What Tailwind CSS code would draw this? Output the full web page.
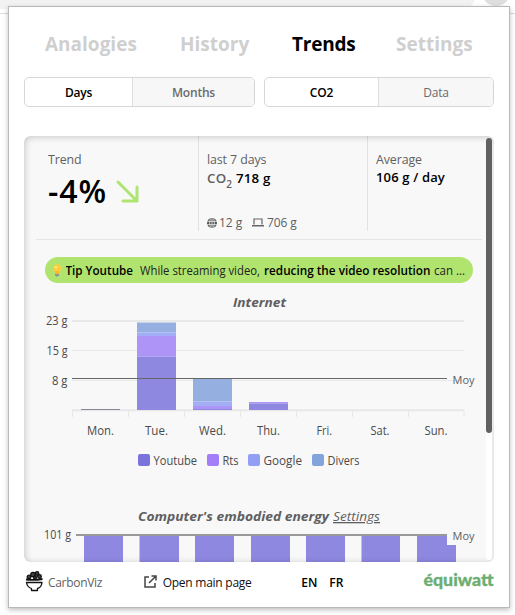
<!DOCTYPE html>
<html lang="en">
<head>
<meta charset="utf-8">
<title>CarbonViz</title>
<script src="https://cdn.jsdelivr.net/npm/@tailwindcss/browser@4"></script>
</head>
<body class="w-[515px] h-[615px] overflow-hidden bg-white font-['Open_Sans','Noto_Sans',sans-serif] text-[#5f5f5f]">
<div class="relative w-[515px] h-[615px] overflow-hidden bg-white">
  <!-- browser toolbar behind the popup -->
  <svg class="absolute left-0 top-0" width="515" height="16"><path d="M0 0H475Q471 8 464 9H0Z" fill="#f2f2f2"/><path d="M0 13.5H515" stroke="#dcdcdc"/><circle cx="496" cy="-8" r="14" fill="#dedede"/></svg>

  <main class="absolute left-[8px] top-[6px] w-[502px] h-[602px] border border-[#b9b9b9] bg-white shadow-[0_2px_5px_rgba(0,0,0,0.25)] pl-[15px] pr-[15px]">
    <nav class="flex h-[70px] pt-[24px] pl-[21px] text-[19px] leading-[27px] font-bold text-[#cfcfcf] whitespace-nowrap">
      <a class="w-[135px]">Analogies</a><a class="w-[112px]">History</a><a class="w-[104px] text-black tracking-[-0.2px]">Trends</a><a>Settings</a>
    </nav>
    <div class="flex gap-[9px] text-[12px] leading-[30px] text-center">
      <div class="flex w-[231px] h-[30px] border border-[#d6d6d6] rounded-[5px] overflow-hidden">
        <span class="w-[107px] font-semibold text-black tracking-[-0.2px]">Days</span><span class="flex-1 bg-[#f7f7f7] border-l border-[#dedede] font-semibold text-[#6b6b6b] tracking-[-0.2px]">Months</span>
      </div>
      <div class="flex w-[230px] h-[30px] border border-[#d6d6d6] rounded-[5px] overflow-hidden">
        <span class="w-[113px] font-semibold text-black tracking-[-0.2px]">CO2</span><span class="flex-1 bg-[#f7f7f7] border-l border-[#dedede] font-medium text-[#6b6b6b] tracking-[-0.2px]">Data</span>
      </div>
    </div>

    <section class="relative mt-[29px] w-[470px] h-[426px] rounded-[6px] bg-[#f8f8f8] overflow-hidden">
      <div class="flex h-[95px] text-[12.4px] leading-[18px] whitespace-nowrap">
        <div class="w-[174px] pl-[24px] pt-[15px]">
          <div class="tracking-[-0.1px]">Trend</div>
          <div class="flex items-start mt-[2px]">
            <b class="w-[68px] text-[32px] leading-[40px] font-semibold text-black tracking-[1px]">-4%</b>
            <svg class="mt-[9px]" width="24" height="24" fill="none" stroke="#aee571" stroke-width="3" stroke-linecap="round" stroke-linejoin="round"><path d="M2 2L21 21M21 7V21H7"/></svg>
          </div>
        </div>
        <div class="w-[169px] border-l border-[#e2e2e2] pl-[8px] pt-[15px]">
          <div class="tracking-[-0.1px]">last 7 days</div>
          <div class="h-[18px] font-semibold text-[13.3px] tracking-[0.2px]">CO<span class="relative top-[5px] text-[10px]">2</span> <span class="text-black">718 g</span></div>
          <div class="flex items-center mt-[27px] h-[18px] text-[12px]">
            <svg class="mr-[2px]" width="10" height="10" viewBox="0 0 11 11"><circle cx="5.500" cy="5.500" r="5.500" fill="#555"/><path d="M0 3.700H11M0 7.300H11M5.500 0V11M3.700 .5Q2 5.500 3.700 10.500M7.300 .5Q9 5.500 7.300 10.500" stroke="#f8f8f8" stroke-width=".8" fill="none"/></svg>
            <span class="w-[33px]">12 g</span>
            <svg class="mr-[3px] -mt-px" width="12" height="9" fill="none" stroke="#666"><path d="M2 6.500V1H10V6.500" stroke-width="1.2"/><path d="M0 7.800H12" stroke-width="1.4"/></svg>
            <span class="tracking-[-0.1px]">706 g</span>
          </div>
        </div>
        <div class="flex-1 border-l border-[#e2e2e2] pl-[8px] pt-[15px]">
          <div class="tracking-[-0.1px]">Average</div>
          <div class="text-[13px] leading-[17px] font-semibold text-black tracking-[0.15px]">106 g / day</div>
        </div>
      </div>
      <hr class="mt-[8px] ml-[12px] w-[446px] border-[#e5e5e5]">
      <div class="flex mt-[17px] ml-[21px] h-[26px] w-[428px] rounded-full bg-[#b0e46f] pl-[7px] text-black text-[12px] leading-[27px] whitespace-nowrap">
        <svg class="mt-[7px] mr-[4px]" width="10" height="13"><circle cx="5" cy="4.400" r="4" fill="#ffcc3c"/><path d="M3 7H7V10H3Z" fill="#f6b833"/><path d="M3 10H7V11.500L5 12.700L3 11.500Z" fill="#8b9399"/><circle cx="4" cy="3.300" r="1.300" fill="#ffe58b"/></svg>
        <svg class="shrink-0" width="402" height="26" font-size="12" fill="#000"><text x="-.5" y="18" font-weight="600" textLength="67.500" lengthAdjust="spacingAndGlyphs">Tip Youtube</text><text x="74" y="18" fill="#222" textLength="120" lengthAdjust="spacingAndGlyphs">While streaming video,</text><text x="198" y="18" font-weight="600" textLength="166.500" lengthAdjust="spacingAndGlyphs">reducing the video resolution</text><text x="368" y="18" fill="#222" textLength="31" lengthAdjust="spacingAndGlyphs">can ...</text></svg>
      </div>

      <!-- charts share the panel's 462px plot column -->
      <svg class="block" width="462" height="279" viewBox="24 283 462 279" font-size="12" fill="#5f5f5f">
        <text x="233" y="307" font-size="13" font-weight="700" font-style="italic" textLength="53" lengthAdjust="spacingAndGlyphs">Internet</text>
        <g stroke="#e8e8e8"><path d="M72 321H464M72 410.3H464" stroke-width="2"/><path d="M72 350.5H464M72 380.5H464M72.5 410V417M128.5 410V417M184.5 410V417M240.5 410V417M296.5 410V417M352.5 410V417M408.5 410V417M464 410V417"/></g>
        <path d="M81 409.5H120" stroke="#889"/>
        <g fill="#95b0e0"><path d="M137 322.500H176V332.500H137ZM193 379H232V401.500H193Z"/></g>
        <g fill="#a1adf5"><path d="M137 332.500H176V336H137ZM193 401.500H232V406H193Z"/></g>
        <g fill="#af94f8"><path d="M137 336H176V356.500H137ZM193 406H232V409H193ZM249 402H288V403.500H249Z"/></g>
        <g fill="#8e88e0"><path d="M137 356.500H176V410H137ZM193 409H232V410H193ZM249 403.500H288V410H249Z"/></g>
        <path d="M72 378.500H447" stroke="#666"/>
        <g fill="#4a4a4a"><text x="46" y="325" textLength="21.500" lengthAdjust="spacingAndGlyphs">23 g</text><text x="46.500" y="355" textLength="21" lengthAdjust="spacingAndGlyphs">15 g</text><text x="52" y="384.500" textLength="15.500" lengthAdjust="spacingAndGlyphs">8 g</text></g>
        <text x="452.500" y="383.500" font-size="11.500" textLength="22" lengthAdjust="spacingAndGlyphs">Moy</text>
        <g fill="#4a4a4a"><text x="87" y="435" textLength="27" lengthAdjust="spacingAndGlyphs">Mon.</text><text x="145" y="435" textLength="23" lengthAdjust="spacingAndGlyphs">Tue.</text><text x="199" y="435" textLength="27" lengthAdjust="spacingAndGlyphs">Wed.</text><text x="257" y="435" textLength="23" lengthAdjust="spacingAndGlyphs">Thu.</text><text x="316.500" y="435" textLength="15.500" lengthAdjust="spacingAndGlyphs">Fri.</text><text x="370.500" y="435" textLength="19" lengthAdjust="spacingAndGlyphs">Sat.</text><text x="424.500" y="435" textLength="23" lengthAdjust="spacingAndGlyphs">Sun.</text></g>
        <rect x="138" y="454" width="12" height="12" rx="2" fill="#7b73dc"/><rect x="207" y="454" width="12" height="12" rx="2" fill="#a27ff8"/><rect x="248" y="454" width="12" height="12" rx="2" fill="#939ff4"/><rect x="312" y="454" width="12" height="12" rx="2" fill="#83a4db"/>
        <g fill="#4a4a4a"><text x="153.500" y="465" textLength="43.500" lengthAdjust="spacingAndGlyphs">Youtube</text><text x="222.500" y="465" textLength="16" lengthAdjust="spacingAndGlyphs">Rts</text><text x="263.500" y="465" textLength="38.500" lengthAdjust="spacingAndGlyphs">Google</text><text x="327.500" y="465" textLength="32" lengthAdjust="spacingAndGlyphs">Divers</text></g>

        <text x="138" y="521" font-size="13" font-weight="700" font-style="italic" textLength="191" lengthAdjust="spacingAndGlyphs">Computer's embodied energy</text>
        <text x="333" y="521" font-size="13" font-style="italic" text-decoration="underline" textLength="47" lengthAdjust="spacingAndGlyphs">Settings</text>
        <path fill="#8e88e0" d="M84 535.500H123V562H84ZM139.500 535.500H179V562H139.500ZM195 535.500H234V562H195ZM251 535.500H290V562H251ZM306 535.500H345V562H306ZM361.500 535.500H400V562H361.500ZM417 535.500H456V562H417Z"/>
        <path d="M447 530H480V545H447Z" fill="#f8f8f8"/>
        <path d="M76 534.500H447" stroke="#999"/><path d="M76 535.500H447" stroke="#999"/>
        <text x="44" y="539" fill="#4a4a4a" textLength="27" lengthAdjust="spacingAndGlyphs">101 g</text>
        <text x="452.500" y="540" font-size="11.500" textLength="22" lengthAdjust="spacingAndGlyphs">Moy</text>
      </svg>
      <div class="absolute inset-0 rounded-[6px] shadow-[inset_1px_1px_7px_rgba(0,0,0,0.2)]"></div>
      <div class="absolute left-[462px] top-[2px] w-[6px] h-[422px] rounded-full bg-white"><div class="h-[295px] rounded-full bg-[#616161]"></div></div>
    </section>

    <footer class="flex h-[41px] items-center text-[12px] whitespace-nowrap">
      <svg width="22" height="24" class="ml-px -mt-[4px]" fill="none" stroke="#111" stroke-width="1.3"><path d="M1.500 13.500H17C16.500 17 14.500 19 12.500 19.500V21.500H6.500V19.500C3.500 18.500 2 17 1.500 13.500Z" stroke-linejoin="round"/><path d="M1 10.500Q9 11.500 17.500 10" stroke-width="1.800"/><g fill="#444"><circle cx="4" cy="8" r="1.800"/><circle cx="8" cy="5.500" r="2.200"/><circle cx="12" cy="4.500" r="1.800"/><circle cx="14.500" cy="7.500" r="1.800"/><circle cx="10" cy="8.500" r="1.500"/></g></svg>
      <span class="w-[97px] tracking-[-0.3px] pl-px">CarbonViz</span>
      <svg width="19" height="13" fill="none" stroke="#444" stroke-width="1.500" class="-mt-[2px]"><path d="M5 2H1V12H11V8M7.500 1H12V5.500M12 1L5 8"/></svg>
      <span class="w-[139px] text-[#111] tracking-[-0.25px]">Open main page</span>
      <span class="w-[28px] font-semibold text-black">EN</span><span class="w-[94px] font-semibold text-black">FR</span>
      <svg width="71" height="24" class="-mt-[4px] shrink-0 overflow-visible"><text x="0.500" y="17" font-family="Lato" font-weight="900" font-size="17" fill="#6cae70" stroke="#6cae70" stroke-width=".3" textLength="70" lengthAdjust="spacingAndGlyphs">équiwatt</text></svg>
    </footer>
  </main>
</div>
</body>
</html>
